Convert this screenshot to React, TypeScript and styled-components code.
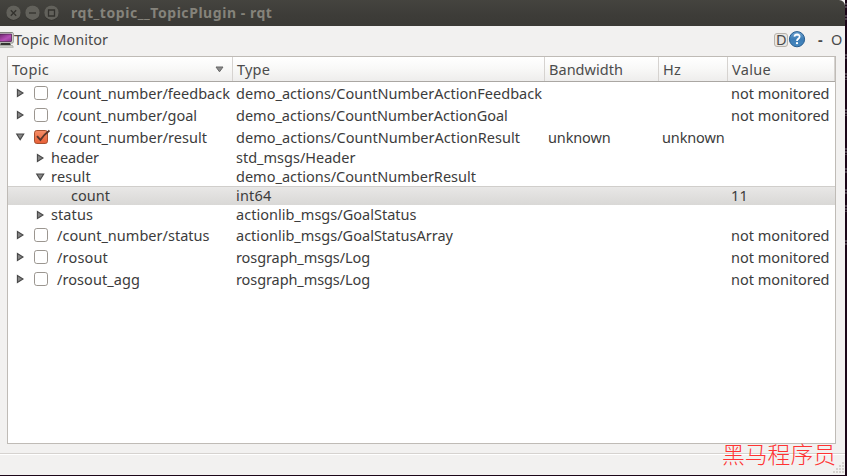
import React, { useLayoutEffect, useRef, useState } from "react";
import styled, { createGlobalStyle, css } from "styled-components";

const GlobalStyle = createGlobalStyle`
  body { margin: 0; overflow: hidden; background: #1d0a1a; }
  * { box-sizing: border-box; }
`;

const Desktop = styled.div`
  position: relative;
  width: 847px;
  height: 476px;
  overflow: hidden;
  background: #1b0618;
  font-family: "Noto Sans", "Open Sans", sans-serif;
  font-size: 14.5px;
  line-height: 18px;
  color: #3c3c3c;
`;

const Window = styled.div`
  display: flex;
  flex-direction: column;
  width: 845px;
  height: 475px;
  background: #f2f1f0;
`;

const TitleBar = styled.header`
  display: flex;
  align-items: center;
  flex: none;
  height: 26px;
  padding-left: 6px;
  border-top-right-radius: 6px;
  background: linear-gradient(#45443f, #3d3c38 60%, #3b3a36);
  color: #85837b;
  font-weight: 700;
  font-size: 14px;
`;

const TitleText = styled.div`
  padding-top: 2px;
`;

const WindowButtons = styled.div`
  display: flex;
  gap: 4px;
  margin-right: 12px;
  svg { display: block; }
`;

const PluginBar = styled.div`
  display: flex;
  align-items: center;
  flex: none;
  height: 30px;
  padding-bottom: 2px;
  color: #4a4a4a;
  svg { display: block; flex: none; }
`;

const PluginTools = styled.div`
  display: flex;
  align-items: center;
  margin-left: auto;
  padding-right: 2px;
`;

const DockButton = styled.span`
  display: flex;
  align-items: center;
  justify-content: center;
  width: 14px;
  height: 14px;
  border: 1px solid #b8b3ac;
  border-radius: 3px;
  background: #e9e6e2;
`;

const ToolGlyph = styled.span<{ $left: number; $bold?: boolean }>`
  margin-left: ${(p) => p.$left}px;
  font-weight: ${(p) => (p.$bold ? 700 : 400)};
`;

const Tree = styled.section`
  flex: none;
  width: 829px;
  height: 388px;
  margin-left: 7px;
  border: 1px solid #bfbbb6;
  background: #fff;
`;

const columns = css`
  display: grid;
  grid-template-columns: 225px 312px 114px 69px 107px;
`;

const HeaderRow = styled.div`
  ${columns}
  height: 25px;
  border-bottom: 1px solid #aaa7a3;
  background: linear-gradient(#fff, #f9f9f8 45%, #eeedec);
`;

const HeaderCell = styled.div`
  display: flex;
  align-items: center;
  justify-content: space-between;
  padding: 1px 8px 0 4px;
  border-right: 1px solid #d6d3d0;
  color: #4c4c4c;
`;

const Row = styled.div<{ $tall: boolean; $selected: boolean }>`
  ${columns}
  height: ${(p) => (p.$tall ? 22 : 19)}px;
  ${(p) =>
    p.$selected &&
    css`
      box-shadow: inset 0 1px #d0cecb;
      background: linear-gradient(#e9e8e7, #d9d8d6);
    `}
`;

const Cell = styled.div<{ $tall: boolean }>`
  display: flex;
  align-items: center;
  padding: ${(p) => (p.$tall ? 2 : 0)}px 0 0 3px;
  min-width: 0;
`;

const TopicCell = styled.div<{ $depth: number }>`
  display: flex;
  align-items: center;
  padding-left: ${(p) => 7 + p.$depth * 20}px;
  svg { display: block; flex: none; }
`;

const Expander = styled.span<{ $tall: boolean }>`
  width: 16px;
  flex: none;
  padding-bottom: ${(p) => (p.$tall ? 1 : 0)}px;
`;

const CheckSlot = styled.span`
  width: 26px;
  flex: none;
  padding-left: 3px;
`;

const TopicName = styled.span<{ $tall: boolean }>`
  padding-top: ${(p) => (p.$tall ? 2 : 0)}px;
`;

const TextRun = styled.span`
  display: block;
  width: max-content;
  white-space: pre;
  line-height: 16px;
  padding-bottom: 2px;
`;

const StatusBar = styled.footer`
  flex: 1;
  margin-top: 9px;
  border-top: 1px solid #d6d3d0;
  box-shadow: inset 0 1px #fff;
  display: flex;
  align-items: flex-end;
  justify-content: flex-end;
`;

const Watermark = styled.div`
  position: absolute;
  left: 722px;
  top: 439px;
  color: #f33;
  font-family: "Noto Sans CJK SC", sans-serif;
  font-weight: 300;
  font-size: 22.8px;
  line-height: 30px;
  white-space: nowrap;
`;

const Backdrop = styled.svg`
  position: absolute;
  right: 0;
  top: 0;
`;

/** Text whose tracking is adjusted so that the run spans the given width. */
function Label({ text, width }: { text: string; width: number }) {
  const ref = useRef<HTMLSpanElement>(null);
  const [spacing, setSpacing] = useState(0);
  useLayoutEffect(() => {
    const el = ref.current;
    if (!el) return;
    const natural = el.getBoundingClientRect().width - spacing * text.length;
    const next = (width - natural) / text.length;
    if (Math.abs(next - spacing) > 0.005) setSpacing(next);
  }, [text, width, spacing]);
  return (
    <TextRun ref={ref} style={{ letterSpacing: spacing }}>
      {text}
    </TextRun>
  );
}

function RoundButton({ d }: { d: string }) {
  return (
    <svg width="15" height="16" viewBox="0 0 15 16">
      <circle cx="7.5" cy="8" r="7.4" fill="#302f2b" />
      <circle cx="7.5" cy="7.7" r="7.2" fill="#62615b" />
      <path d={d} fill="none" stroke="#33322e" strokeWidth="1.3" />
    </svg>
  );
}

function Arrow({ open }: { open: boolean }) {
  return (
    <svg width="10" height="10" viewBox="0 0 10 10">
      <path
        d={open ? "M1.7 2H8.7L5.2 7.6Z" : "M2.4 1.5V8.5L8 5Z"}
        fill="#858585"
        stroke="#484848"
        strokeWidth="1.1"
      />
    </svg>
  );
}

function CheckBox({ checked }: { checked: boolean }) {
  return (
    <svg width="17" height="16" viewBox="0 0 17 16">
      <defs>
        <linearGradient id="orange" x2="0" y2="1">
          <stop stopColor="#f69069" />
          <stop offset="1" stopColor="#e85f36" />
        </linearGradient>
      </defs>
      <rect
        x="0.5" y="1.5" width="13" height="13" rx="2.3"
        fill={checked ? "url(#orange)" : "#fff"}
        stroke={checked ? "#a7502f" : "#9b9690"}
      />
      {checked && <path d="M3 7.2L6.4 11Q9.5 5.8 15.5 1.4" fill="none" stroke="#59362b" strokeWidth="1.9" />}
    </svg>
  );
}

function MonitorIcon() {
  return (
    <svg width="14" height="18" viewBox="0 0 14 18">
      <defs>
        <linearGradient id="screen" x2="1" y2="1">
          <stop stopColor="#642265" />
          <stop offset=".6" stopColor="#b44eb5" />
          <stop offset="1" stopColor="#8c348f" />
        </linearGradient>
      </defs>
      <rect x="-3" y="1.5" width="16.2" height="10.5" rx="1" fill="#e9e9e6" stroke="#81857e" />
      <rect x="-2" y="3" width="13.5" height="7.5" fill="url(#screen)" stroke="#411542" strokeWidth=".7" />
      <path d="M1 12H10L11 14.2H0Z" fill="#333631" />
      <path d="M-2 14.5H12.5L13.3 16.3H-2Z" fill="#d7d9d4" stroke="#9b9e98" strokeWidth=".7" />
    </svg>
  );
}

function HelpIcon() {
  return (
    <svg width="18" height="18" viewBox="0 0 18 18">
      <defs>
        <linearGradient id="help" x2="0" y2="1">
          <stop stopColor="#71a5d1" />
          <stop offset=".5" stopColor="#3d7db6" />
          <stop offset="1" stopColor="#4588bf" />
        </linearGradient>
      </defs>
      <circle cx="9" cy="8.2" r="7.6" fill="url(#help)" stroke="#285e91" />
      <path d="M6.4 5.7Q6.7 3.5 9.1 3.5Q11.7 3.6 11.6 5.8Q11.5 7 10.2 7.9Q9 8.6 9 10" fill="none" stroke="#fff" strokeWidth="1.8" />
      <circle cx="9" cy="12.2" r="1.15" fill="#fff" />
    </svg>
  );
}

type Text = [string, number];

interface Topic {
  name: Text;
  type: Text;
  depth: number;
  open?: boolean;
  checked?: boolean;
  bandwidth?: Text;
  hz?: Text;
  value?: Text;
  selected?: boolean;
}

const idle: Text = ["not monitored", 98.5];
const unknown: Text = ["unknown", 62.5];

const topics: Topic[] = [
  { name: ["/count_number/feedback", 173], type: ["demo_actions/CountNumberActionFeedback", 306], depth: 0, open: false, checked: false, value: idle },
  { name: ["/count_number/goal", 140], type: ["demo_actions/CountNumberActionGoal", 272], depth: 0, open: false, checked: false, value: idle },
  { name: ["/count_number/result", 150], type: ["demo_actions/CountNumberActionResult", 284], depth: 0, open: true, checked: true, bandwidth: unknown, hz: unknown },
  { name: ["header", 48], type: ["std_msgs/Header", 119.5], depth: 1, open: false },
  { name: ["result", 40], type: ["demo_actions/CountNumberResult", 240], depth: 1, open: true },
  { name: ["count", 39], type: ["int64", 35.5], depth: 2, value: ["11", 17], selected: true },
  { name: ["status", 42], type: ["actionlib_msgs/GoalStatus", 180.5], depth: 1, open: false },
  { name: ["/count_number/status", 152.5], type: ["actionlib_msgs/GoalStatusArray", 217], depth: 0, open: false, checked: false, value: idle },
  { name: ["/rosout", 51], type: ["rosgraph_msgs/Log", 134], depth: 0, open: false, checked: false, value: idle },
  { name: ["/rosout_agg", 83], type: ["rosgraph_msgs/Log", 134], depth: 0, open: false, checked: false, value: idle },
];

const headings: Text[] = [["Topic", 37], ["Type", 33], ["Bandwidth", 74], ["Hz", 18], ["Value", 39]];

function TopicRow({ topic }: { topic: Topic }) {
  const tall = topic.checked !== undefined;
  const cells = [topic.type, topic.bandwidth, topic.hz, topic.value];
  return (
    <Row $tall={tall} $selected={!!topic.selected}>
      <TopicCell $depth={topic.depth}>
        <Expander $tall={tall}>{topic.open !== undefined && <Arrow open={topic.open} />}</Expander>
        {topic.checked !== undefined && (
          <CheckSlot>
            <CheckBox checked={topic.checked} />
          </CheckSlot>
        )}
        <TopicName $tall={tall}>
          <Label text={topic.name[0]} width={topic.name[1]} />
        </TopicName>
      </TopicCell>
      {cells.map((c, i) => (
        <Cell key={i} $tall={tall}>
          {c && <Label text={c[0]} width={c[1]} />}
        </Cell>
      ))}
    </Row>
  );
}

export default function App() {
  return (
    <Desktop>
      <GlobalStyle />
      <Backdrop width="2" height="476">
        <path d="M1 3v6M1 15v6M1 54v6M1 73v7M1 109v7M1 148v7M1 168v6M1 189v5M1 205v7M1 240v5" stroke="#827982" strokeDasharray="2 1" />
      </Backdrop>
      <Window>
        <TitleBar>
          <WindowButtons>
            <RoundButton d="M4.8 5.3L10.2 10.7M10.2 5.3L4.8 10.7" />
            <RoundButton d="M4 8H11" />
            <RoundButton d="M4.5 5H10.5V11H4.5Z" />
          </WindowButtons>
          <TitleText>
            <Label text="rqt_topic__TopicPlugin - rqt" width={201.5} />
          </TitleText>
        </TitleBar>
        <PluginBar>
          <MonitorIcon />
          <Label text="Topic Monitor" width={94} />
          <PluginTools>
            <DockButton><Label text="D" width={10} /></DockButton>
            <HelpIcon />
            <ToolGlyph $left={12} $bold><Label text="-" width={5} /></ToolGlyph>
            <ToolGlyph $left={8}><Label text="O" width={12} /></ToolGlyph>
          </PluginTools>
        </PluginBar>
        <Tree>
          <HeaderRow>
            {headings.map(([text, width], i) => (
              <HeaderCell key={text}>
                <Label text={text} width={width} />
                {i === 0 && (
                  <svg width="9" height="7" viewBox="0 0 9 7">
                    <path d="M1 1H8L4.5 5.8Z" fill="#8b8b8b" stroke="#666" />
                  </svg>
                )}
              </HeaderCell>
            ))}
          </HeaderRow>
          {topics.map((t) => (
            <TopicRow key={t.name[0]} topic={t} />
          ))}
        </Tree>
        <StatusBar>
          <svg width="13" height="13" viewBox="0 0 13 13">
            <path d="M10 1h2M7 4h2M10 4h2M4 7h2M7 7h2M10 7h2M1 10h2M4 10h2M7 10h2M10 10h2" stroke="#cbc8c4" strokeWidth="1.5" />
          </svg>
        </StatusBar>
      </Window>
      <Watermark>黑马程序员</Watermark>
    </Desktop>
  );
}
